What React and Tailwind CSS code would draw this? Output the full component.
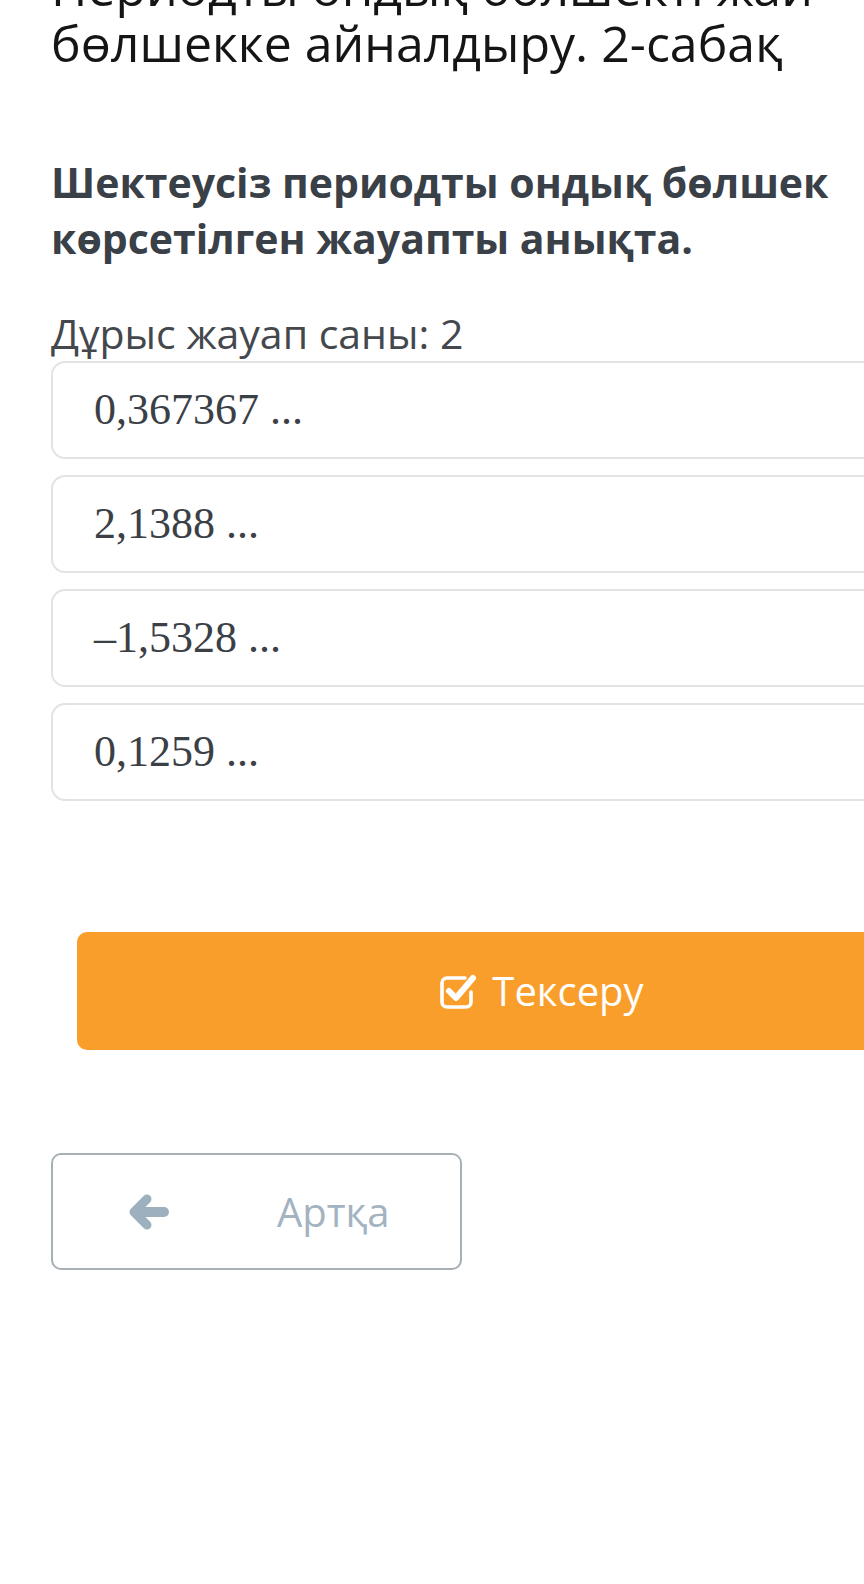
const options = ['0,367367 ...', '2,1388 ...', '–1,5328 ...', '0,1259 ...']

const CheckSquare = () => (
  <svg width="40" height="40" viewBox="0 0 40 40" fill="none">
    <path
      d="M27 7H9a5 5 0 0 0-5 5v19a5 5 0 0 0 5 5h19a5 5 0 0 0 5-5V21"
      stroke="white"
      strokeWidth="3.6"
      strokeLinecap="round"
    />
    <path
      d="M11 20l7 7L35 7"
      stroke="white"
      strokeWidth="6"
      strokeLinecap="round"
      strokeLinejoin="round"
    />
  </svg>
)

// chunky solid back arrow
const BackArrow = () => (
  <svg width="40" height="36" viewBox="0 0 40 36" fill="none" stroke="#9db0be" strokeLinecap="round" strokeLinejoin="round">
    <path d="M18 5L5 18l13 13" strokeWidth="9" />
    <path d="M8 18h27" strokeWidth="10" />
  </svg>
)

export default function App() {
  return (
    <div
      className="w-full h-[1584px] overflow-hidden bg-white"
      style={{ fontFamily: '"Open Sans", "Noto Sans", sans-serif' }}
    >
      <div className="pl-[51px]">
        <h1 className="-mt-[41px] text-[50px] leading-[56px] text-[#151515] whitespace-nowrap">
          Периодты ондық бөлшекті жай
          <br />
          бөлшекке айналдыру. 2-сабақ
        </h1>

        <h2 className="mt-[83px] text-[41px] leading-[56px] font-bold text-[#3a4047] whitespace-nowrap">
          Шектеусіз периодты ондық бөлшек
          <br />
          көрсетілген жауапты анықта.
        </h2>

        <p className="mt-[43px] text-[41px] leading-[48px] text-[#44484d]">Дұрыс жауап саны: 2</p>

        <div className="mt-[4px] flex flex-col gap-[16px] w-[900px]">
          {options.map((o) => (
            <div
              key={o}
              className="h-[98px] flex items-center pl-[41px] border-2 border-[#e3e3e3] rounded-[14px] text-[44px] text-[#3b4046]"
              style={{ fontFamily: '"Liberation Serif", "DejaVu Serif", serif' }}
            >
              {o}
            </div>
          ))}
        </div>

        <button className="mt-[131px] ml-[26px] w-[928px] h-[118px] rounded-[10px] bg-[#f99e2b] flex items-center justify-center gap-[14px] text-white text-[40px]">
          <CheckSquare />
          <span>Тексеру</span>
        </button>

        <button className="mt-[103px] w-[411px] h-[117px] rounded-[10px] border-2 border-[#a7b0b5] bg-white flex items-center pl-[76px] text-[40px] text-[#a3b3bf]">
          <BackArrow />
          <span className="ml-[108px]">Артқа</span>
        </button>
      </div>
    </div>
  )
}
